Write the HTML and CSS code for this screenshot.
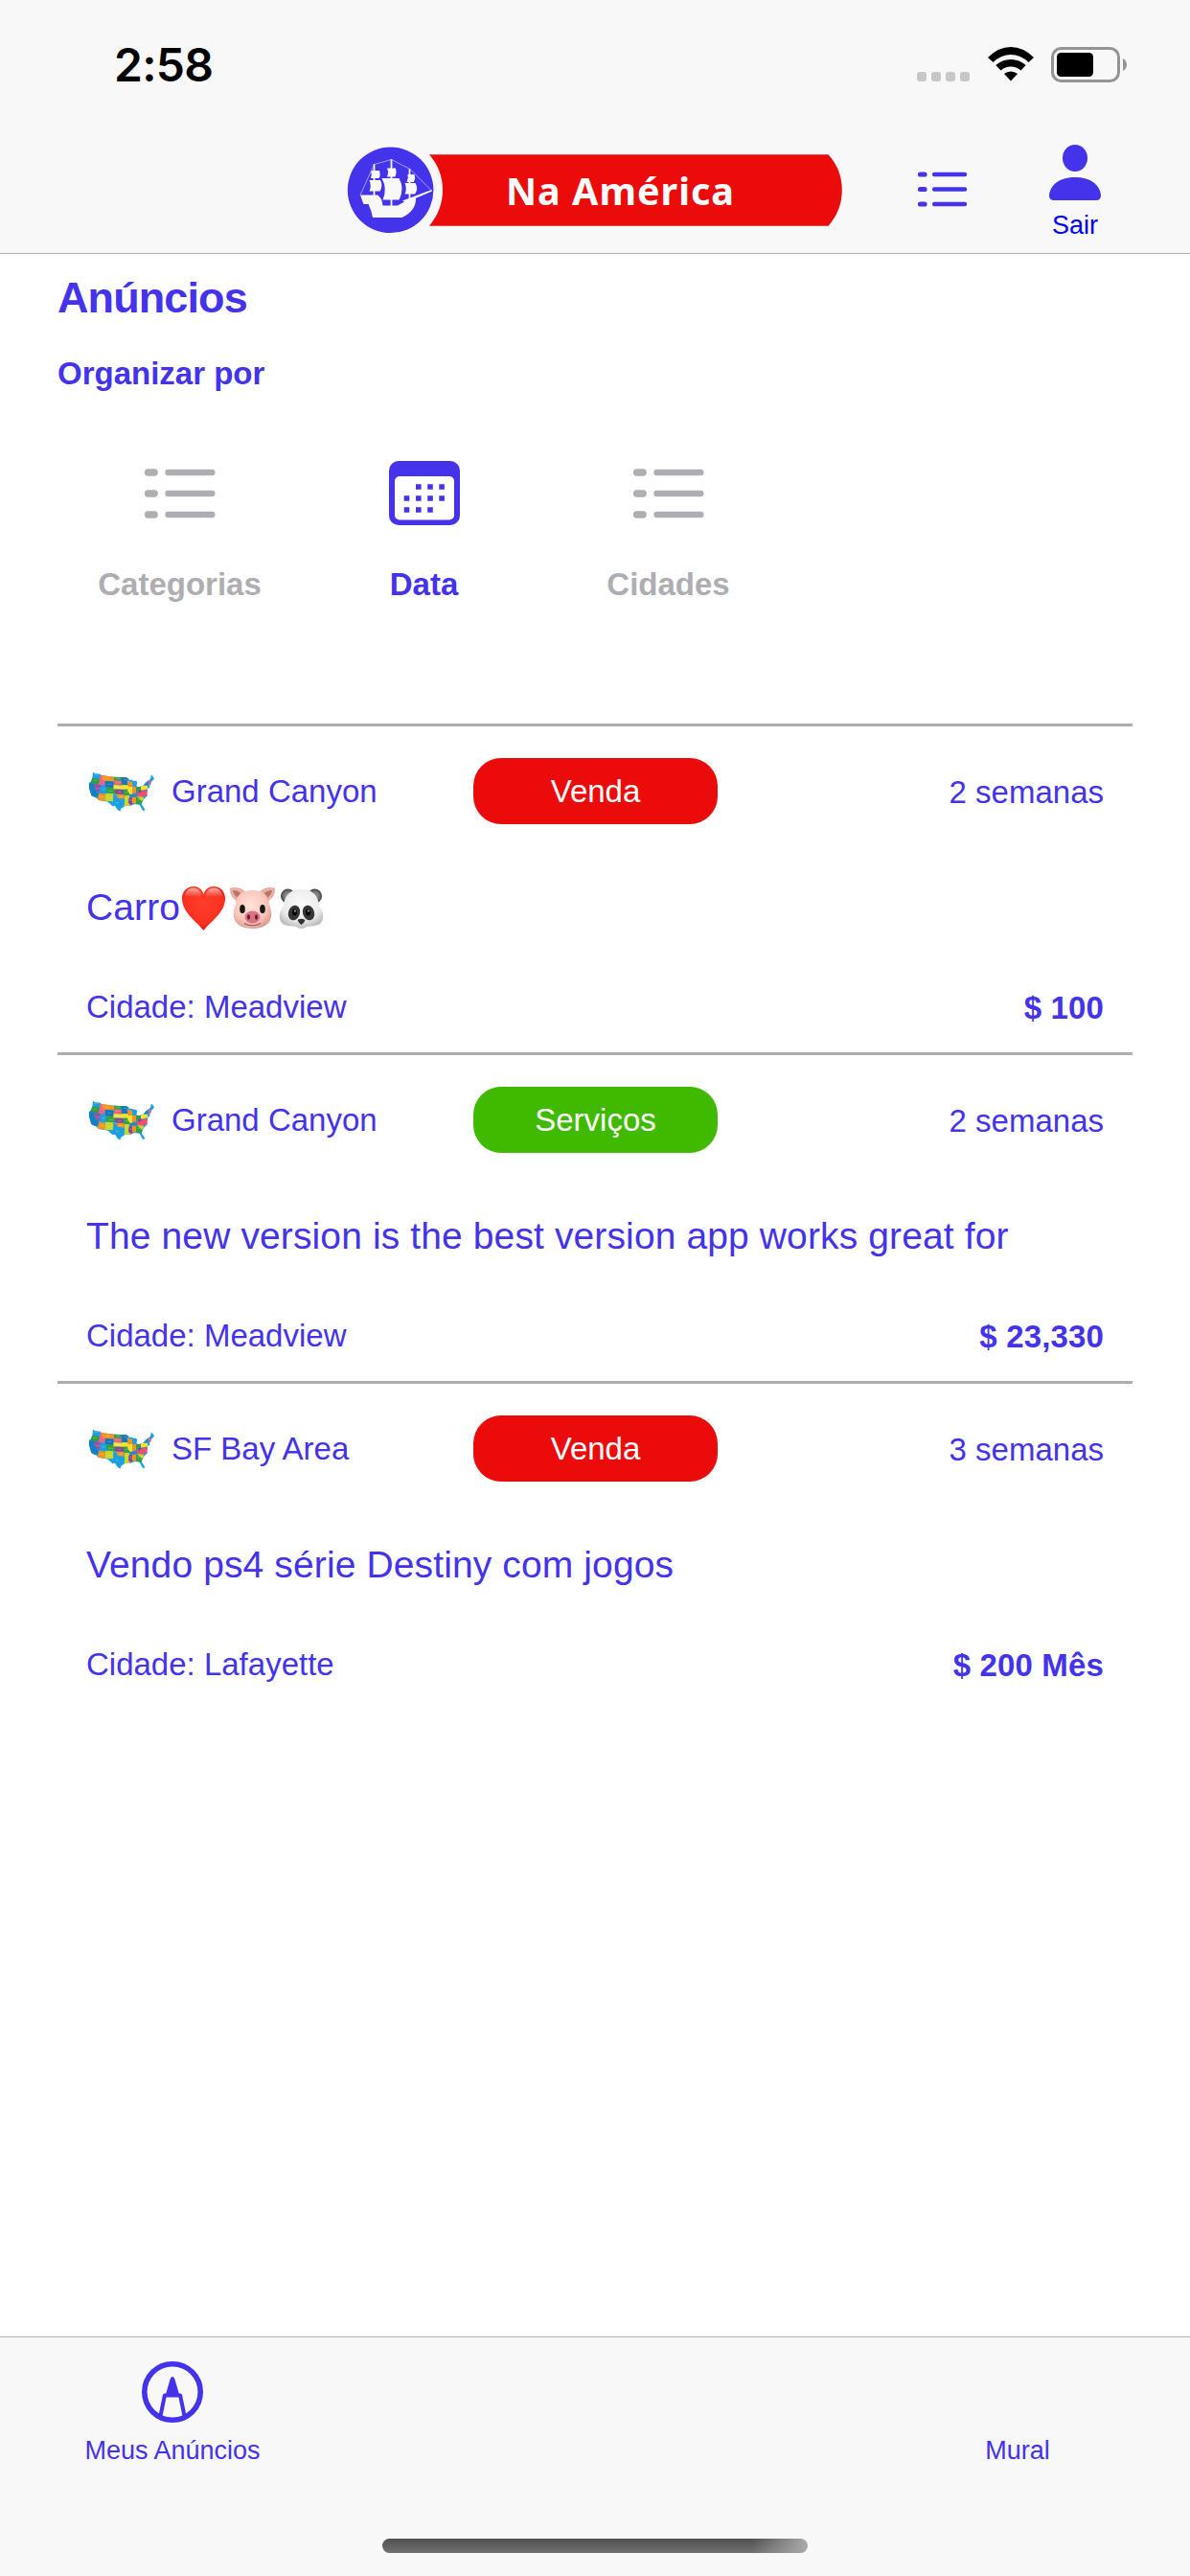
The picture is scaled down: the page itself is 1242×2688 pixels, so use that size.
FILE: index.html
```html
<!DOCTYPE html>
<html lang="pt-BR">
<head>
<meta charset="utf-8">
<title>Na América</title>
<link rel="stylesheet" href="styles.css">
</head>
<body>
<svg class="sprite" width="0" height="0" aria-hidden="true">
  <defs>
    <clipPath id="usa-outline"><path d="M51 78L56 79L55 81L75 83L76 87L118 92L155 94L165 98L162 101L172 101L178 104L186 104L190 110L187 121L195 124L205 120L210 118L218 108L225 103L231 98L233 88L237 88L243 98L234 107L232 115L228 119L230 124L222 130L222 140L219 143L222 150L210 162L205 171L203 178L213 193L212 198L207 197L200 185L197 180L190 178L180 178L172 181L168 184L160 182L150 184L138 192L137 200L128 195L120 182L112 184L106 178L98 170L88 168L68 165L62 158L46 150L40 130L38 112L44 108L49 96Z"/></clipPath>
    <radialGradient id="pig-skin" cx=".45" cy=".4" r=".65"><stop offset="0" stop-color="#ffe3da"/><stop offset=".65" stop-color="#f9c5bb"/><stop offset="1" stop-color="#d9998e"/></radialGradient>
    <radialGradient id="panda-fur" cx=".5" cy=".35" r=".65"><stop offset="0" stop-color="#fbfbfb"/><stop offset=".7" stop-color="#e9e9e9"/><stop offset="1" stop-color="#bcbcbc"/></radialGradient>
    <radialGradient id="panda-ear"><stop offset="0" stop-color="#9a9a9a"/><stop offset=".6" stop-color="#777"/><stop offset="1" stop-color="#3b3b3b"/></radialGradient>
    <radialGradient id="heart-fill" cx=".5" cy=".4" r=".65"><stop offset="0" stop-color="#ff3d2a"/><stop offset=".7" stop-color="#fa3020"/><stop offset="1" stop-color="#d3120c"/></radialGradient>
    <linearGradient id="heart-shine" x2="0" y2="1"><stop offset="0" stop-color="#fff" stop-opacity=".6"/><stop offset="1" stop-color="#fff" stop-opacity="0"/></linearGradient>
  </defs>
  <symbol id="usa" viewBox="36 75 210 126">
    <g clip-path="url(#usa-outline)">
      <path fill="#1ba1e2" d="M36 75h210v126H36z"/>
      <path fill="#2f9e3f" d="M40 94l32 4-4 16-30-3z"/>
      <path fill="#1180c4" d="M36 111l20 2-1 14 14 20-3 8-30 2z"/>
      <path fill="#9c4f9a" d="M56 113l20 3-6 28-15-18z"/>
      <path fill="#f0618a" d="M74 83h7l2 14 6 6v16l-20-3z"/>
      <path fill="#f7941d" d="M80 80l38 8-1 18-33-2-5-9z"/>
      <path fill="#1176bd" d="M90 105l26 2-2 20-25-3z"/>
      <path fill="#1ba1e2" d="M76 117l14 4 4 4-4 20-20-3z"/>
      <path fill="#f7941d" d="M70 143l21 3-3 23-24-6 4-12z"/>
      <path fill="#3c9f3a" d="M94 124l27 3-2 17-27-2z"/>
      <path fill="#c5d92d" d="M91 143l24 2-1 24-26-2z"/>
      <path fill="#36a041" d="M118 88l22 2 1 14-24-1z"/>
      <path fill="#ee6170" d="M117 103l24 2v13l-25-1z"/>
      <path fill="#fbe12b" d="M116 117l27 2 4 12-32-1z"/>
      <path fill="#87468e" d="M121 131l27 1v15l-28-2z"/>
      <path fill="#f7941d" d="M121 146l28 1v14l-22-3v-9h-8z"/>
      <path fill="#1176bd" d="M140 90l23 3-6 10 3 15-18-1z"/>
      <path fill="#fbe12b" d="M142 117l19 1 4 8-5 5h-15z"/>
      <path fill="#f7941d" d="M158 104l16 3 1 16-14-1z"/>
      <path fill="#35a040" d="M146 131h16l8 19h-21z"/>
      <path fill="#c5d92d" d="M150 150h16l-3 18h-13z"/>
      <path fill="#c5d92d" d="M150 168h13l9 12-12 6-11-3z"/>
      <path fill="#fbe12b" d="M162 123h13v22l-8 2-8-13z"/>
      <path fill="#f7941d" d="M175 123h11v18l-11 4z"/>
      <path fill="#2e9d46" d="M186 124l15-3-1 15-12 4z"/>
      <path fill="#f0506d" d="M195 139l25-7 4 17-24 8-9-4-26 2 10-8z"/>
      <path fill="#864694" d="M192 138l8-8 7 5-12 10zM164 157h11v22h-8l-5-6z"/>
      <path fill="#fbe12b" d="M201 121l21-6 1 15-22 4z"/>
      <path fill="#128fcf" d="M166 148l24-3-2 8-22 2zM210 108h15v11h-15z"/>
      <path fill="#f7941d" d="M174 156h12v19h-12z"/>
      <path fill="#35a040" d="M186 155l14 1 7 13-4 9h-17z"/>
      <path fill="#c5d92d" d="M189 153l20 2 2 7-8 5z"/>
      <path fill="#f0618a" d="M224 102h6l4 16-8 2z"/>
      <path stroke="#fff" stroke-width="1.300" stroke-opacity=".55" d="M55 85h12M51 103h12M61 128h12M90 97h12M96 115h12M80 131h9M100 136h14M73 155h12M97 158h13M123 97h13M121 109h14M123 125h14M128 139h12M132 154h12M122 173h10M147 100h9M152 140h9M154 158h8M166 165h8M190 163h8"/>
    </g>
  </symbol>
  <symbol id="list-wide" viewBox="0 0 74 52">
    <g stroke="currentColor" stroke-width="6.400" stroke-linecap="round"><path d="M3.500 4h6.600M3.500 26h6.600M3.500 48h6.600" stroke-width="7.400"/><path d="M24.500 4h45.800M24.500 26h45.800M24.500 48h45.800"/></g>
  </symbol>
</svg>

<header class="top">
  <div class="status">
    <span class="clock">2:58</span>
    <div class="indicators">
      <div class="signal"><i></i><i></i><i></i><i></i></div>
      <svg class="wifi" width="48" height="37" viewBox="0 0 48 37"><path d="M0 11Q11 0 24 0T48 11L42.500 16Q34 8 24 8T5.500 16Z"/><path d="M8.300 19Q15 13 24 13T39.700 19L34.500 24.500Q30 20.500 24 20.500T13.500 24.500Z"/><path d="M17 28Q20 25.500 24 25.500T31 28L24 35.500Z"/></svg>
      <svg class="battery" width="80" height="37" viewBox="0 0 80 37"><rect x="1.500" y="1.500" width="69" height="34" rx="9" fill="none" stroke="#949494" stroke-width="3"/><rect x="6" y="6" width="38" height="25" rx="4.500"/><path d="M75 12Q79 14.500 79 18.500T75 25Z" fill="#949494"/></svg>
    </div>
  </div>
  <nav class="nav">
    <svg class="logo" width="518" height="92" viewBox="362 152 518 92">
      <circle cx="407.600" cy="198.300" r="44.800" fill="#4433ea"/>
      <g fill="#f8f8f8">
        <path d="M376 203.500H394Q398.500 206 399.500 214.500H415Q425 208.500 434 206.500Q434.500 220 419.500 227H389Q387.500 219 384.500 213H379.500Q377.500 208 376 203.500Z"/>
        <path d="M387 178H396Q397.500 183 395.500 186H387Q388.500 182 387 178ZM385.500 188H397Q400 194 396.500 199.500H385.500Q388 194 385.500 188ZM404 175.500H413Q414.500 180 412.500 184.500H404Q406 180 404 175.500ZM398.500 186H416.500Q422.500 197 416.500 208.500H399.500Q404.500 197 398.500 186ZM425.500 182H432.500Q434 186 432 190H424.500Q426.500 186 425.500 182ZM422.500 191H433.500Q437 197 433 202.500H422.500Q425 197 422.500 191Z"/>
        <path d="M420 209.500L450.500 198L451 199.500L423 211.500Z"/>
      </g>
      <path d="M390.500 171V204M408.500 166V215M427.500 176V208" stroke="#f8f8f8" stroke-width="1.800" fill="none"/>
      <path d="M376 203.500L390.500 171.500L408.500 166.500L428 176.500L450.500 199" stroke="#bdb6fa" stroke-width=".8" fill="none"/>
      <path d="M448 161.300H864.500Q878.800 177 878.800 198.300T864.500 235.800H448Q462 219 462 198.300T448 161.300Z" fill="#ec0b0b"/>
      <text class="logo-text" x="528" y="214" textLength="238" lengthAdjust="spacing">Na América</text>
    </svg>
    <svg class="menu" width="52" height="37" viewBox="0 0 52 37"><g stroke="currentColor" stroke-linecap="round"><path d="M2.500 3h4.500M2.500 18.500h4.500M2.500 34h4.500" stroke-width="5.200"/><path d="M17.200 3h31.800M17.200 18.500h31.800M17.200 34h31.800" stroke-width="4.500"/></g></svg>
    <div class="profile">
      <svg width="54" height="59" viewBox="0 0 54 59" fill="currentColor"><ellipse cx="27" cy="14" rx="13" ry="14"/><path d="M0 53C1 41 12 34 27 34S53 41 54 53Q54 58 49 58H5Q0 58 0 53Z"/></svg>
      <span>Sair</span>
    </div>
  </nav>
</header>

<main class="content">
  <h1>Anúncios</h1>
  <h2>Organizar por</h2>
  <div class="tabs">
    <div class="tab"><svg width="74" height="52"><use href="#list-wide"/></svg><span>Categorias</span></div>
    <div class="tab active"><svg width="74" height="67" viewBox="0 0 74 67"><rect width="74" height="67" rx="10" fill="currentColor"/><rect x="6" y="16" width="62" height="45.500" rx="5" fill="#fff"/><g stroke="currentColor" stroke-width="5.600"><path d="M28 27h5.600M40.200 27h5.600M52.300 27h5.600M15.700 39h5.600M28 39h5.600M40.200 39h5.600M52.300 39h5.600M15.700 51h5.600M28 51h5.600M40.200 51h5.600"/></g></svg><span>Data</span></div>
    <div class="tab"><svg width="74" height="52"><use href="#list-wide"/></svg><span>Cidades</span></div>
  </div>

  <section class="ads">
    <article class="ad">
      <div class="ad-head">
        <div class="region"><svg width="70" height="42"><use href="#usa"/></svg><span>Grand Canyon</span></div>
        <span class="pill sale">Venda</span>
        <span class="age">2 semanas</span>
      </div>
      <div class="title">Carro<svg width="51" height="48" viewBox="0 0 51 48"><path d="M24.500 48C19 40 2 30 2 14.500C2 7 7.500 2 14 2C19 2 23 5 24.500 10C26 5 30 2 35 2C42 2 47 7 47 14.500C47 30 30 40 24.500 48Z" fill="url(#heart-fill)"/><path d="M5 13C5 6 9 3.500 14 3.500C19 3.500 22 7 23 13ZM26 13C27 7 30 3.500 35 3.500C40 3.500 44 6 44 13Z" fill="url(#heart-shine)"/></svg><svg width="51" height="48" viewBox="0 0 51 48"><path d="M8 17Q1 12 1.500 4Q12 2 18 9ZM41 17Q48 12 47.500 4Q37 2 31 9Z" fill="#eeb1a5" stroke="#d6968a" stroke-width=".7"/><path d="M9 14Q4 10 4 6Q10 6 13 10ZM40 14Q45 10 45 6Q39 6 36 10Z" fill="#b97669"/><path d="M24.500 6C35 6 42 11 42 21C45 28 45 34 42 39C38 44 32 46 24.500 46S11 44 7 39C4 34 4 28 7 21C7 11 14 6 24.500 6Z" fill="url(#pig-skin)"/><ellipse cx="14" cy="25.500" rx="2.800" ry="4.500" fill="#181818"/><ellipse cx="35" cy="25.500" rx="2.800" ry="4.500" fill="#181818"/><path d="M16 40.500Q24.500 45 33 40.500" fill="none" stroke="#96564f" stroke-width="1.200"/><ellipse cx="24.500" cy="34" rx="8" ry="6.500" fill="#dc7186"/><ellipse cx="20.500" cy="34" rx="1.500" ry="2.800" fill="#5d1d2e"/><ellipse cx="28.500" cy="34" rx="1.500" ry="2.800" fill="#5d1d2e"/></svg><svg width="51" height="48" viewBox="0 0 51 48"><circle cx="10.500" cy="12" r="7.500" fill="url(#panda-ear)"/><circle cx="38.500" cy="12" r="7.500" fill="url(#panda-ear)"/><path d="M24.500 5C36 5 42 11 43 22C48 29 49 36 44 41C39 44 34 43 30 44Q24.500 48 19 44C15 43 10 44 5 41C0 36 1 29 6 22C7 11 13 5 24.500 5Z" fill="url(#panda-fur)"/><ellipse cx="17" cy="29.500" rx="6" ry="8" transform="rotate(18 17 29.500)" fill="#363636"/><ellipse cx="32" cy="29.500" rx="6" ry="8" transform="rotate(-18 32 29.500)" fill="#363636"/><ellipse cx="17.500" cy="29" rx="2.500" ry="3.500" fill="#090909"/><ellipse cx="31.500" cy="29" rx="2.500" ry="3.500" fill="#090909"/><circle cx="18" cy="27.500" r=".9" fill="#bbb"/><circle cx="32" cy="27.500" r=".9" fill="#bbb"/><path d="M20.500 37Q24.500 34.500 28.500 37Q27.500 40 24.500 42Q21.500 40 20.500 37Z" fill="#333"/></svg></div>
      <div class="ad-foot"><span>Cidade: Meadview</span><strong>$ 100</strong></div>
    </article>
    <article class="ad">
      <div class="ad-head">
        <div class="region"><svg width="70" height="42"><use href="#usa"/></svg><span>Grand Canyon</span></div>
        <span class="pill service">Serviços</span>
        <span class="age">2 semanas</span>
      </div>
      <div class="title">The new version is the best version app works great for</div>
      <div class="ad-foot"><span>Cidade: Meadview</span><strong>$ 23,330</strong></div>
    </article>
    <article class="ad">
      <div class="ad-head">
        <div class="region"><svg width="70" height="42"><use href="#usa"/></svg><span>SF Bay Area</span></div>
        <span class="pill sale">Venda</span>
        <span class="age">3 semanas</span>
      </div>
      <div class="title">Vendo ps4 série Destiny com jogos</div>
      <div class="ad-foot"><span>Cidade: Lafayette</span><strong>$ 200 Mês</strong></div>
    </article>
  </section>
</main>

<footer class="bottom">
  <div class="bottom-tabs">
    <div class="bottom-tab">
      <svg width="64" height="64" viewBox="0 0 64 64"><circle cx="32" cy="32" r="29.200" fill="none" stroke="currentColor" stroke-width="5.600"/><path d="M19.500 57L23.900 35.500H40.100L44.500 57" fill="none" stroke="currentColor" stroke-width="4" stroke-linejoin="round"/><path d="M24.500 36L29.800 18Q32 14 34.200 18L39.500 36Z" fill="currentColor"/></svg>
      <span>Meus Anúncios</span>
    </div>
    <div class="bottom-tab"><span>Mural</span></div>
  </div>
  <div class="home-bar"></div>
</footer>
</body>
</html>
```

FILE: styles.css
```css
* { box-sizing: border-box; }

body {
  margin: 0;
  width: 1242px;
  height: 2688px;
  display: flex;
  flex-direction: column;
  overflow: hidden;
  background: #fff;
  color: #4433ea;
  font: 33px/40px "Liberation Sans", Arial, sans-serif;
}

svg { display: block; flex: none; }
.sprite { position: absolute; }

.top {
  flex: none;
  height: 265px;
  background: #f8f8f8;
  border-bottom: 1px solid #b2b2b2;
}

.status {
  height: 132px;
  display: flex;
  justify-content: space-between;
  padding: 38px 65px 0 119px;
  color: #000;
}

.clock {
  font: 600 48px/60px Inter, sans-serif;
  letter-spacing: -0.7px;
}

.indicators { display: flex; padding-top: 11px; }

.signal { display: flex; gap: 5px; padding-top: 26px; margin-right: 19px; }
.signal i { width: 10px; height: 10px; border-radius: 3px; background: #c7c7c7; }
.wifi { margin-right: 18px; }

.nav {
  display: flex;
  padding-left: 362px;
  height: 132px;
}

.logo { margin-top: 20px; }

.logo-text {
  fill: #fff;
  font: 700 39.5px "Noto Sans", "Open Sans", sans-serif;
}

.menu { margin: 47px 0 0 78px; }

.profile {
  width: 54px;
  margin: 19px 0 0 85px;
  display: flex;
  flex-direction: column;
  align-items: center;
  gap: 9px;
}

.profile span { color: #00f; font-size: 27px; line-height: 32px; }

.content { flex: 1; padding: 20px 60px 0; }

h1 { margin: 0; font-size: 45px; line-height: 52px; letter-spacing: -0.9px; }
h2 { margin: 33px 0 0; font-size: 33px; line-height: 40px; }

.tabs { display: flex; margin-top: 71px; }

.tab {
  width: 255px;
  height: 149px;
  display: grid;
  grid-template-rows: 67px 40px;
  row-gap: 42px;
  place-items: center;
  color: #aeaeb2;
  font-weight: bold;
}

.tab.active { color: #4433ea; }

.ads { margin-top: 125px; }

.ad {
  height: 343px;
  padding: 33px 30px 0;
  border-top: 3px solid #aeaeb2;
}

.ad-head {
  display: grid;
  grid-template-columns: 404px 255px 1fr;
  align-items: center;
}

.region { display: flex; align-items: center; gap: 17px; padding-left: 2px; }

.pill {
  height: 69px;
  border-radius: 29px;
  line-height: 69px;
  text-align: center;
  color: #fff;
}

.sale { background: #ec0b0b; }
.service { background: #3fba00; }

.age { text-align: right; padding-top: 2px; }

.title {
  display: flex;
  margin-top: 63px;
  font-size: 39px;
  line-height: 48px;
  letter-spacing: 0.12px;
  white-space: nowrap;
}

.ad-foot { display: flex; justify-content: space-between; margin-top: 60px; }
.ad-foot strong { padding-top: 1px; letter-spacing: 0.15px; }

.bottom {
  height: 250px;
  flex: none;
  display: flex;
  flex-direction: column;
  justify-content: space-between;
  align-items: center;
  padding: 25px 0 24px;
  background: #f8f8f8;
  border-top: 1px solid #b2b2b2;
}

.bottom-tabs {
  width: 100%;
  display: flex;
  justify-content: space-between;
  align-items: flex-end;
  padding: 0 60px;
  font-size: 27px;
  line-height: 32px;
}

.bottom-tab {
  width: 240px;
  display: flex;
  flex-direction: column;
  align-items: center;
  gap: 13px;
}

.home-bar {
  width: 444px;
  height: 15px;
  border-radius: 8px;
  background: linear-gradient(to right, transparent 87%, #aaa), linear-gradient(#505050, #717171);
}
```
